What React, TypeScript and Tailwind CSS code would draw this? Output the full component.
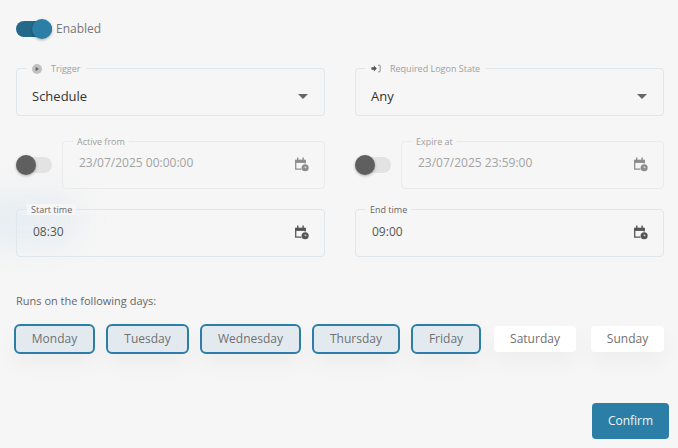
function CalendarClock({ className }: { className: string }) {
  return (
    <svg viewBox="0 0 14 14" className={className} fill="none">
      <path d="M3.5 0.5v2.5M8.5 0.5v2.5" stroke="currentColor" strokeWidth="1.3" />
      <path d="M1 2.5h10v3H1z" fill="currentColor" />
      <path d="M1.6 3v8.4h5.4" stroke="currentColor" strokeWidth="1.2" />
      <path d="M10.4 3v3" stroke="currentColor" strokeWidth="1.2" />
      <circle cx="10.4" cy="10" r="3.3" fill="currentColor" />
      <path d="M10.4 8.8V10h1.2" stroke="#f6f6f6" strokeWidth="0.8" />
    </svg>
  );
}

function Toggle({ on }: { on?: boolean }) {
  return (
    <div className="relative h-[16px] w-[36px] shrink-0 rounded-full">
      <div className={`h-full w-full rounded-full ${on ? "bg-[#24688a]" : "bg-[#e3e3e3]"}`} />
      <div
        className={`absolute -top-[2px] h-[20px] w-[20px] rounded-full shadow-[0_1px_3px_rgba(0,0,0,0.3)] ${
          on ? "right-0 bg-[#2b7fa6]" : "left-0 bg-[#5f5f5f]"
        }`}
      />
    </div>
  );
}

function SelectBox({ label, value, icon }: { label: string; value: string; icon: React.ReactNode }) {
  return (
    <div className="relative flex h-[48px] flex-1 items-center justify-between rounded-[4px] border border-[#dfe6ec] px-[15px] pt-[9px]">
      <div className="absolute -top-[6px] left-[9px] flex items-center gap-[9px] bg-[#f6f6f6] px-[6px] text-[9px] leading-[11px] text-[#a0a0a0]">
        {icon}
        <span>{label}</span>
      </div>
      <span className="text-[13px] text-[#333]">{value}</span>
      <div className="mr-[1px] h-0 w-0 border-x-[5px] border-t-[5px] border-x-transparent border-t-[#666]" />
    </div>
  );
}

function DateBox({ label, value, disabled, wide }: { label: string; value: string; disabled?: boolean; wide?: boolean }) {
  return (
    <div
      className={`relative flex h-[48px] flex-1 items-start justify-between rounded-[4px] border pl-[16px] pr-[15px] ${
        disabled ? "border-[#ebebeb] pt-[13px]" : "border-[#dfe6ec] pt-[14px]"
      }`}
    >
      <span
        className={`absolute -top-[6px] bg-[#f6f6f6] text-[9px] leading-[11px] ${
          wide ? "left-[10px] px-[4px] text-[#666]" : "left-[10px] px-[4px] text-[#a0a0a0]"
        }`}
      >
        {label}
      </span>
      <span className={`text-[12px] leading-[16px] ${disabled ? "text-[#a3a3a3]" : "text-[#555]"}`}>{value}</span>
      <CalendarClock className={`h-[15px] w-[15px] ${disabled ? "mt-[2px] text-[#8c8c8c]" : "mt-[1px] text-[#555]"}`} />
    </div>
  );
}

function Day({ name, active, width }: { name: string; active?: boolean; width: string }) {
  return (
    <div
      className={`flex items-center justify-center text-[12px] text-[#707070] shadow-[0_10px_22px_rgba(0,0,0,0.04)] ${width} ${
        active
          ? "h-[30px] rounded-[6px] border-2 border-[#2b7fa6] bg-[#e2eaf0]"
          : "h-[26px] rounded-[4px] bg-white"
      }`}
    >
      {name}
    </div>
  );
}

export default function App() {
  return (
    <div className="relative h-[448px] w-[678px] overflow-hidden bg-[#f6f6f6] px-[14px] pt-[19px] font-['Open_Sans',sans-serif]">
      {/* smudge left of start time */}
      <div className="pointer-events-none absolute left-[-30px] top-[192px] h-[56px] w-[110px] rounded-full bg-[#e8eef2] blur-[14px]" />

      <div className="relative">
        <div className="ml-[2px] flex items-center gap-[4px]">
          <Toggle on />
          <span className="text-[12px] leading-[20px] text-[#777]">Enabled</span>
        </div>

        <div className="mt-[29px] ml-[2px] flex w-[648px] gap-[30px]">
          <SelectBox
            label="Trigger"
            value="Schedule"
            icon={
              <svg viewBox="0 0 10 10" className="h-[10px] w-[10px]">
                <circle cx="5" cy="5" r="5" fill="#c2c2c2" />
                <path d="M3.6 2.8l3.4 2.2-3.4 2.2z" fill="#666" />
              </svg>
            }
          />
          <SelectBox
            label="Required Logon State"
            value="Any"
            icon={
              <svg viewBox="0 0 12 10" className="h-[9px] w-[10px]" fill="none">
                <path d="M0.5 3.5h3V1.5l3.5 3.5-3.5 3.5V6.5h-3z" fill="#555" />
                <path d="M8.5 1H10q1 0 1 1v6q0 1-1 1H8.5" stroke="#777" />
              </svg>
            }
          />
        </div>

        <div className="mt-[25px] ml-[2px] flex w-[648px] gap-[30px]">
          <div className="flex flex-1 items-center gap-[10px]">
            <Toggle />
            <DateBox label="Active from" value="23/07/2025 00:00:00" disabled />
          </div>
          <div className="flex flex-1 items-center gap-[10px]">
            <Toggle />
            <DateBox label="Expire at" value="23/07/2025 23:59:00" disabled />
          </div>
        </div>

        <div className="mt-[20px] ml-[2px] flex w-[648px] gap-[30px]">
          <DateBox label="Start time" value="08:30" wide />
          <DateBox label="End time" value="09:00" wide />
        </div>

        <p className="mt-[36px] ml-[2px] text-[11px] leading-[16px] text-[#666]">Runs on the following days:</p>

        <div className="mt-[15px] flex items-center">
          <Day name="Monday" active width="w-[81px] mr-[11px]" />
          <Day name="Tuesday" active width="w-[83px] mr-[11px]" />
          <Day name="Wednesday" active width="w-[101px] mr-[11px]" />
          <Day name="Thursday" active width="w-[88px] mr-[11px]" />
          <Day name="Friday" active width="w-[70px] mr-[13px]" />
          <Day name="Saturday" width="w-[82px] mr-[15px]" />
          <Day name="Sunday" width="w-[73px]" />
        </div>

        <div className="mt-[49px] flex justify-end">
          <button className="mr-[-5px] h-[36px] w-[77px] rounded-[4px] bg-[#2b7fa6] text-[12px] font-medium text-[#eef5f9]">
            Confirm
          </button>
        </div>
      </div>
    </div>
  );
}
